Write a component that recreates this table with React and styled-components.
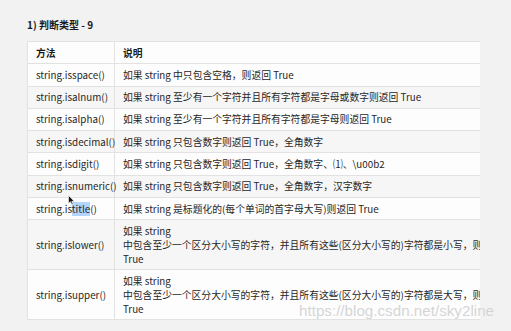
import React from "react";
import styled, { createGlobalStyle } from "styled-components";

const Global = createGlobalStyle`
  html, body { margin: 0; padding: 0; }
  body {
    background: #f2f2f2;
    font-family: "Noto Sans CJK SC", "Noto Sans", sans-serif;
    color: #262626;
    -webkit-font-smoothing: antialiased;
  }
`;

const Page = styled.div`
  position: relative;
  width: 511px;
  height: 331px;
  overflow: hidden;
  padding: 17px 0 0 27px;
  box-sizing: border-box;
`;

const Title = styled.h3`
  margin: 0 0 9px 0;
  font-size: 10px;
  line-height: 15px;
  font-weight: 700;
  color: #1a1a1a;
`;

const Clip = styled.div`
  width: 453px;
  overflow: hidden;
`;

const Table = styled.table`
  border-collapse: collapse;
  width: 640px;
  table-layout: fixed;
  font-size: 9.8px;
`;

const Row = styled.tr`
  background: ${(p) => (p.$striped ? "#f6f6f6" : "#fdfdfd")};
`;

const Cell = styled.td`
  border: 1px solid #e2e2e2;
  padding: 3.5px 8px;
  line-height: 14.3px;
  white-space: nowrap;
  vertical-align: middle;
  width: ${(p) => p.$w || "auto"};
  color: #262626;
`;

const Head = styled(Cell).attrs({ as: "th" })`
  text-align: left;
  font-weight: 700;
  color: #1a1a1a;
`;

const Sel = styled.span`
  background: #b3d4fc;
`;

const Line = styled.div`
  line-height: 14px;
  height: 14px;
`;

const Watermark = styled.div`
  position: absolute;
  left: 299px;
  top: 302px;
  font-family: "Liberation Sans", Arial, sans-serif;
  font-size: 15.2px;
  color: rgba(205, 205, 205, 0.85);
  text-shadow: 0 0 1px rgba(255, 255, 255, 0.5);
  pointer-events: none;
`;

const Cursor = styled.svg`
  position: absolute;
  left: 68px;
  top: 195px;
`;

const rows = [
  ["string.isspace()", "如果 string 中只包含空格，则返回 True"],
  ["string.isalnum()", "如果 string 至少有一个字符并且所有字符都是字母或数字则返回 True"],
  ["string.isalpha()", "如果 string 至少有一个字符并且所有字符都是字母则返回 True"],
  ["string.isdecimal()", "如果 string 只包含数字则返回 True，全角数字"],
  ["string.isdigit()", "如果 string 只包含数字则返回 True，全角数字、⑴、\\u00b2"],
  ["string.isnumeric()", "如果 string 只包含数字则返回 True，全角数字，汉字数字"],
  ["title", "如果 string 是标题化的(每个单词的首字母大写)则返回 True"],
  [
    "string.islower()",
    ["如果 string", "中包含至少一个区分大小写的字符，并且所有这些(区分大小写的)字符都是小写，则返回", "True"],
  ],
  [
    "string.isupper()",
    ["如果 string", "中包含至少一个区分大小写的字符，并且所有这些(区分大小写的)字符都是大写，则返回", "True"],
  ],
];

export default function App() {
  return (
    <>
      <Global />
      <Page>
        <Title>1) 判断类型 - 9</Title>
        <Clip>
          <Table>
            <thead>
              <Row>
                <Head $w="70px">方法</Head>
                <Head>说明</Head>
              </Row>
            </thead>
            <tbody>
              {rows.map(([m, d], i) => (
                <Row key={i} $striped={i % 2 === 1}>
                  <Cell>
                    {m === "title" ? (
                      <>
                        string.is<Sel>title</Sel>()
                      </>
                    ) : (
                      m
                    )}
                  </Cell>
                  <Cell>
                    {Array.isArray(d) ? d.map((l, j) => <Line key={j}>{l}</Line>) : d}
                  </Cell>
                </Row>
              ))}
            </tbody>
          </Table>
        </Clip>
        <Cursor width="7" height="10" viewBox="0 0 7 10">
          <path d="M0.5 0.5 L0.5 8.5 L2.5 6.7 L3.8 9.5 L5 9 L3.8 6.3 L6.3 6.2 Z" fill="#111" stroke="#fff" strokeWidth="0.6" />
        </Cursor>
        <Watermark>https://blog.csdn.net/sky2line</Watermark>
      </Page>
    </>
  );
}
